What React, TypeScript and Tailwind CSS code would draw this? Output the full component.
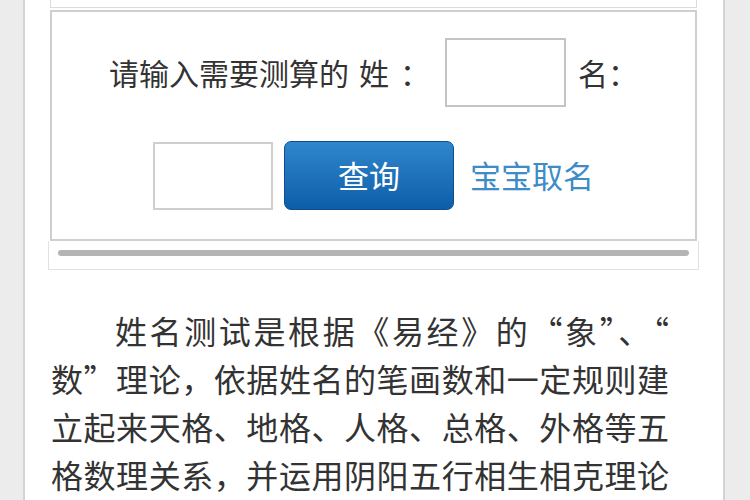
const font = { fontFamily: '"Noto Sans CJK SC", "Noto Sans", sans-serif' };

const lines = [
  '姓名测试是根据《易经》的“象”、“',
  '数”理论，依据姓名的笔画数和一定规则建',
  '立起来天格、地格、人格、总格、外格等五',
  '格数理关系，并运用阴阳五行相生相克理论',
];

const App = () => {
  return (
    <div className="w-[750px] h-[500px] overflow-hidden bg-[#ececec]" style={font}>
      <div className="ml-[23px] w-[702px] h-[500px] bg-white border-x-2 border-[#d4d4d4]">
        {/* tail of the box above */}
        <div className="ml-[25px] w-[647px] h-[8px] border-x border-b border-[#dcdcdc]" />

        {/* query form */}
        <div className="ml-[25px] mt-[2px] w-[647px] h-[231px] border-2 border-[#cfcfcf] pt-[26px]">
          <div className="flex items-center justify-center h-[69px] text-[30px] text-[#333]">
            <span>请输入需要测算的</span>
            <span className="ml-[10px]">姓</span>
            <span className="ml-[11px]">：</span>
            <input
              type="text"
              className="ml-[15px] w-[121px] h-[69px] border-2 border-[#c4c4c4] bg-white outline-none"
            />
            <span className="ml-[12px]">名：</span>
          </div>
          <div className="flex items-center justify-center mt-[34px]">
            <input
              type="text"
              className="w-[120px] h-[68px] border-2 border-[#cfcfcf] bg-white outline-none"
            />
            <button className="ml-[11px] w-[170px] h-[69px] rounded-[7px] border border-[#0b4f90] bg-gradient-to-b from-[#2f86cc] to-[#0d5ea9] text-white text-[31px]">
              查询
            </button>
            <a className="ml-[16px] text-[31px] text-[#3d8cc8]">宝宝取名</a>
          </div>
        </div>

        {/* divider bar */}
        <div className="ml-[23px] w-[651px] h-[29px] border-x border-b border-[#e2e2e2] pt-[9px] px-[9px]">
          <div className="h-[6px] rounded-full bg-[#b4b4b4]" />
        </div>

        {/* description */}
        <div className="ml-[26px] mt-[36px] w-[618px] text-[32px] leading-[48px] text-[#333]">
          {lines.map((line, i) => (
            <div
              key={i}
              className={`whitespace-nowrap text-justify [text-align-last:justify] ${i === 0 ? 'pl-[64px]' : ''}`}
            >
              {line}
            </div>
          ))}
        </div>
      </div>
    </div>
  );
};

export default App;
